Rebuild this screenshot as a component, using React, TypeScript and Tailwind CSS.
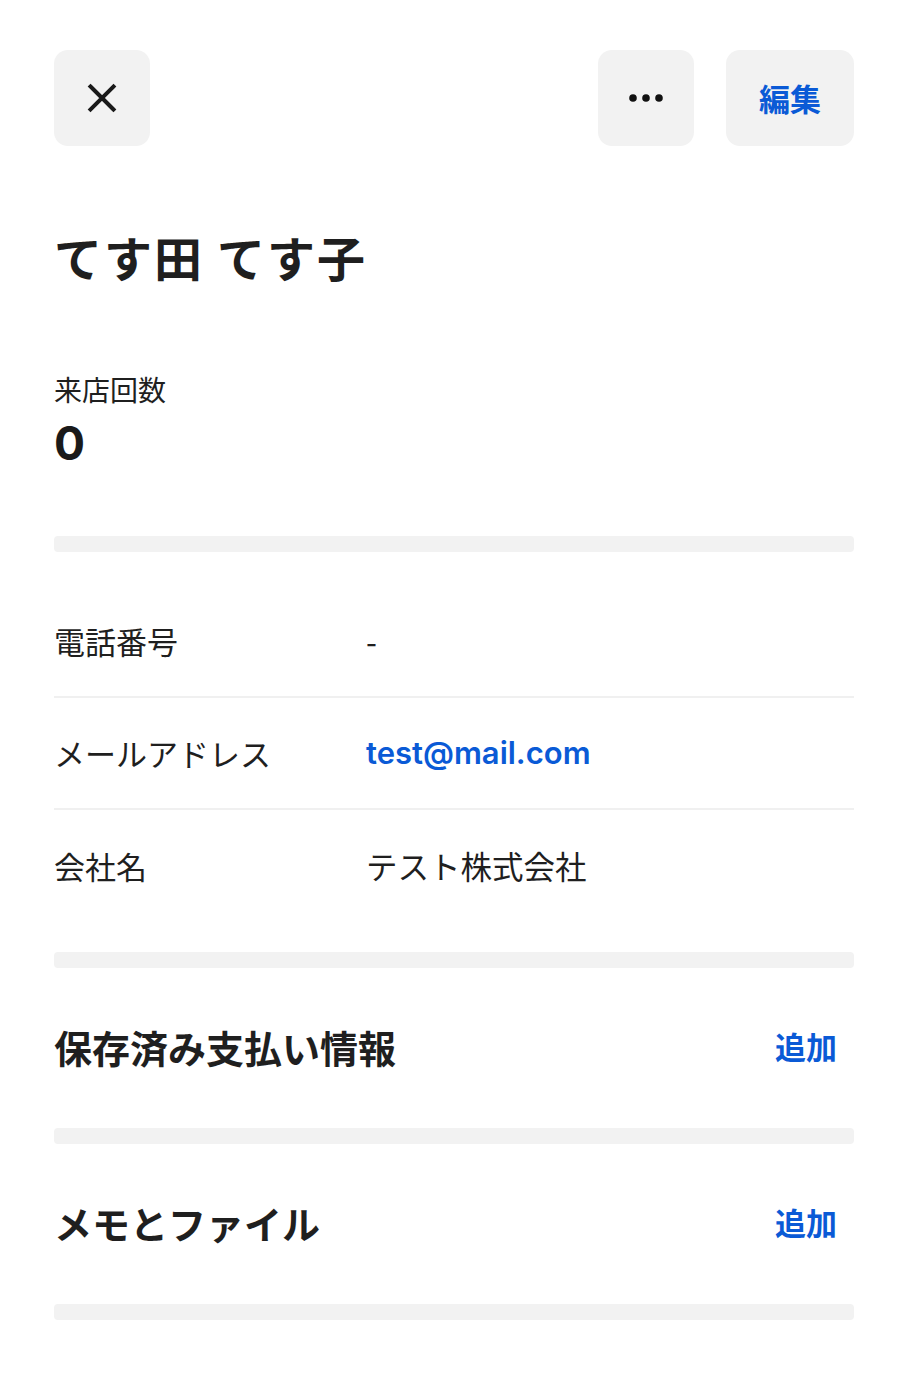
import React from "react";

const jp = "font-['Noto_Sans_CJK_JP','Noto_Sans',sans-serif]";

function Bar() {
  return <div className="h-[16px] w-full rounded-[4px] bg-[#f2f2f2]" />;
}

function Row({ label, value, link, last }: { label: string; value: string; link?: boolean; last?: boolean }) {
  return (
    <div className={`flex h-[112px] items-center ${last ? "" : "border-b-2 border-[#f0f0f0]"}`}>
      <div className="w-[312px] text-[31px] text-[#1f1f1f]">{label}</div>
      {link ? (
        <a href="#" className="font-['Inter',sans-serif] text-[31px] font-semibold text-[#0a5ad6]">
          {value}
        </a>
      ) : (
        <div className="text-[31.5px] text-[#1f1f1f]">{value}</div>
      )}
    </div>
  );
}

function Section({ title }: { title: string }) {
  return (
    <div className="flex h-[160px] items-center justify-between pb-[4px]">
      <h2 className="text-[38px] font-bold text-[#1f1f1f]">{title}</h2>
      <button className="pr-[17px] text-[31px] font-semibold text-[#0a5ad6]">追加</button>
    </div>
  );
}

export default function App() {
  return (
    <div className={`${jp} min-h-[1382px] w-[908px] bg-white px-[54px] pt-[50px]`}>
      {/* header buttons */}
      <div className="flex h-[96px] items-center justify-between">
        <button className="flex h-[96px] w-[96px] items-center justify-center rounded-[14px] bg-[#f2f2f2]">
          <svg width="30" height="30" viewBox="0 0 30 30" fill="none" stroke="#1a1a1a" strokeWidth="4" strokeLinecap="square">
            <path d="M3.5 3.5L26.5 26.5M26.5 3.5L3.5 26.5" />
          </svg>
        </button>
        <div className="flex gap-[32px]">
          <button className="flex h-[96px] w-[96px] items-center justify-center rounded-[14px] bg-[#f2f2f2]">
            <svg width="34" height="8" viewBox="0 0 34 8" fill="#111">
              <circle cx="4" cy="4" r="3.8" />
              <circle cx="17" cy="4" r="3.8" />
              <circle cx="30" cy="4" r="3.8" />
            </svg>
          </button>
          <button className="flex h-[96px] w-[128px] items-center justify-center rounded-[14px] bg-[#f2f2f2] text-[31px] font-bold text-[#0a5ad6]">
            編集
          </button>
        </div>
      </div>

      {/* name */}
      <h1 className="mt-[81px] text-[48px] leading-[58px] font-bold tracking-[2px] text-[#1f1f1f]">てす田 てす子</h1>

      {/* visits */}
      <div className="mt-[84px] text-[28px] leading-[40px] text-[#1f1f1f]">来店回数</div>
      <div className="mt-[8px] font-['Inter',sans-serif] text-[46px] leading-[52px] font-bold text-[#1a1a1a]">0</div>

      <div className="mt-[67px]">
        <Bar />
      </div>

      {/* contact */}
      <div className="mt-[34px]">
        <Row label="電話番号" value="-" />
        <Row label="メールアドレス" value="test@mail.com" link />
        <Row label="会社名" value="テスト株式会社" last />
      </div>

      <div className="mt-[30px]">
        <Bar />
      </div>
      <Section title="保存済み支払い情報" />
      <Bar />
      <Section title="メモとファイル" />
      <Bar />
    </div>
  );
}
